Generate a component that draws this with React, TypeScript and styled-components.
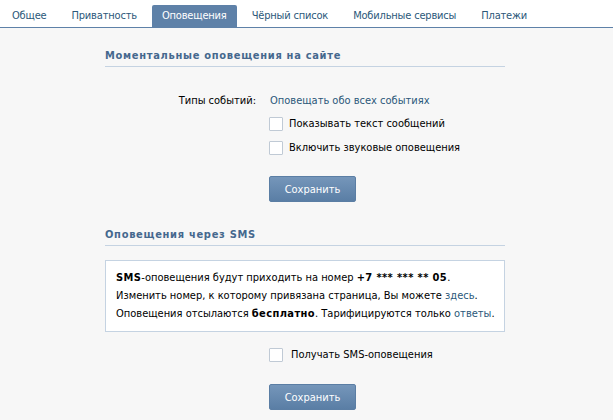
import React from "react";
import styled, { createGlobalStyle } from "styled-components";

const Global = createGlobalStyle`
  html, body { margin: 0; padding: 0; background: #f7f7f7; }
  body { font-family: "DejaVu Sans Condensed", "DejaVu Sans", Tahoma, sans-serif; font-size: 11px; color: #000; }
`;

const Page = styled.div`
  width: 613px;
  height: 420px;
  background: #f7f7f7;
  overflow: hidden;
`;

const TabBar = styled.div`
  display: flex;
  align-items: flex-end;
  gap: 5px;
  height: 22px;
  padding: 5px 0 0 2px;
  background: #fff;
  border-bottom: 1px solid #5e81a8;
`;

const Tab = styled.div<{ $active?: boolean }>`
  height: 22px;
  line-height: 22px;
  padding: 0 10px;
  border-radius: 2px 2px 0 0;
  letter-spacing: -0.18px;
  color: ${(p) => (p.$active ? "#fff" : "#2b587a")};
  background: ${(p) => (p.$active ? "#5e81a8" : "transparent")};
  white-space: nowrap;
`;

const Content = styled.div`
  width: 400px;
  padding: 0 0 0 105px;
`;

const SectionHeader = styled.div<{ $top: number }>`
  margin-top: ${(p) => p.$top}px;
  padding: 0 0 3px 0;
  line-height: 14px;
  font-weight: bold;
  letter-spacing: 0.7px;
  color: #45688e;
  border-bottom: 1px solid #c5d3e2;
`;

const FormRow = styled.div<{ $top: number }>`
  display: grid;
  grid-template-columns: 151px 1fr;
  column-gap: 14px;
  margin-top: ${(p) => p.$top}px;
  line-height: 14px;
`;

const Label = styled.div`
  text-align: right;
`;

const Link = styled.a`
  color: #2b587a;
  text-decoration: none;
  cursor: pointer;
`;

const Indented = styled.div<{ $top: number }>`
  margin: ${(p) => p.$top}px 0 0 164px;
`;

const CheckRow = styled.label<{ $top: number; $gap?: number }>`
  display: flex;
  align-items: center;
  gap: ${(p) => p.$gap ?? 6}px;
  margin-top: ${(p) => p.$top}px;
  line-height: 14px;
  cursor: pointer;
`;

const Box = styled.span`
  display: inline-block;
  width: 12px;
  height: 12px;
  border: 1px solid #c0cad5;
  background: #fff;
  border-radius: 1px;
  flex: none;
`;

const Button = styled.button<{ $top: number }>`
  display: block;
  margin-top: ${(p) => p.$top}px;
  width: 87px;
  height: 26px;
  padding: 0;
  border: 1px solid #5b7ea4;
  border-radius: 2px;
  background: linear-gradient(#7596ba, #5a7ea5);
  color: #fff;
  font-family: inherit;
  font-size: 11px;
  cursor: pointer;
`;

const InfoBox = styled.div`
  margin-top: 14px;
  border: 1px solid #c5d3e2;
  background: #fff;
  padding: 8px 10px;
  line-height: 18px;
`;

const InfoLine = styled.div`
  white-space: nowrap;
`;

const Strong = styled.b`
  font-weight: bold;
  letter-spacing: 0.4px;
`;

export default function App() {
  return (
    <Page>
      <Global />
      <TabBar>
        <Tab>Общее</Tab>
        <Tab>Приватность</Tab>
        <Tab $active>Оповещения</Tab>
        <Tab>Чёрный список</Tab>
        <Tab>Мобильные сервисы</Tab>
        <Tab>Платежи</Tab>
      </TabBar>
      <Content>
        <SectionHeader $top={21}>Моментальные оповещения на сайте</SectionHeader>
        <FormRow $top={27}>
          <Label>Типы событий:</Label>
          <Link>Оповещать обо всех событиях</Link>
        </FormRow>
        <Indented $top={0}>
          <CheckRow $top={9}>
            <Box />
            Показывать текст сообщений
          </CheckRow>
          <CheckRow $top={10}>
            <Box />
            Включить звуковые оповещения
          </CheckRow>
          <Button $top={21}>Сохранить</Button>
        </Indented>
        <SectionHeader $top={26}>Оповещения через SMS</SectionHeader>
        <InfoBox>
          <InfoLine>
            <Strong>SMS</Strong>-оповещения будут приходить на номер <Strong>+7 *** *** ** 05</Strong>.
          </InfoLine>
          <InfoLine>
            Изменить номер, к которому привязана страница, Вы можете <Link>здесь</Link>.
          </InfoLine>
          <InfoLine>
            Оповещения отсылаются <Strong>бесплатно</Strong>. Тарифицируются только <Link>ответы</Link>.
          </InfoLine>
        </InfoBox>
        <Indented $top={0}>
          <CheckRow $top={16} $gap={8}>
            <Box />
            Получать SMS-оповещения
          </CheckRow>
          <Button $top={22}>Сохранить</Button>
        </Indented>
      </Content>
    </Page>
  );
}
